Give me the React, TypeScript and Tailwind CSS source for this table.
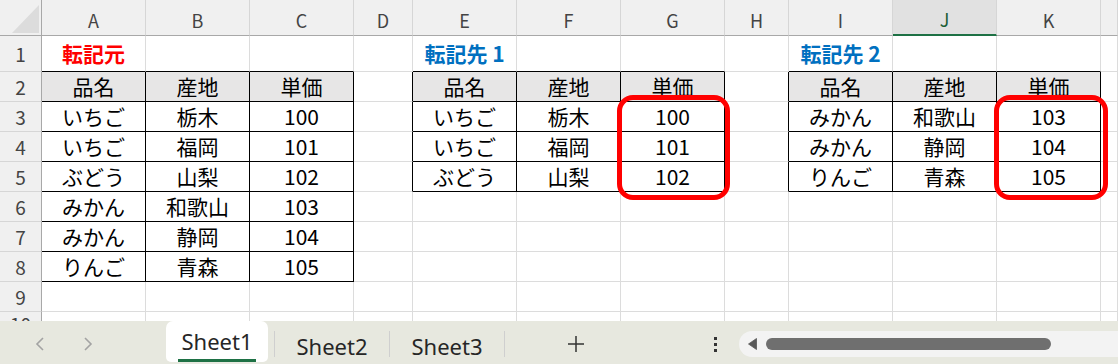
import React from "react";

const COLS = ["A", "B", "C", "D", "E", "F", "G", "H", "I", "J", "K", ""];
const ROWS = [1, 2, 3, 4, 5, 6, 7, 8, 9, 10];

type T = { c0: number; c1: number; r0: number; r1: number };
const TABLES: T[] = [
  { c0: 1, c1: 3, r0: 2, r1: 8 },
  { c0: 5, c1: 7, r0: 2, r1: 5 },
  { c0: 9, c1: 11, r0: 2, r1: 5 },
];

const inTable = (r: number, c: number) =>
  TABLES.some((t) => r >= t.r0 && r <= t.r1 && c >= t.c0 && c <= t.c1);

const HEAD = ["品名", "産地", "単価"];
const T1 = [
  ["いちご", "栃木", "100"],
  ["いちご", "福岡", "101"],
  ["ぶどう", "山梨", "102"],
  ["みかん", "和歌山", "103"],
  ["みかん", "静岡", "104"],
  ["りんご", "青森", "105"],
];
const T2 = T1.slice(0, 3);
const T3 = T1.slice(3, 6);

function cellText(r: number, c: number): { text: string; kind: "title-red" | "title-blue" | "normal" } | null {
  if (r === 1) {
    if (c === 1) return { text: "転記元", kind: "title-red" };
    if (c === 5) return { text: "転記先 1", kind: "title-blue" };
    if (c === 9) return { text: "転記先 2", kind: "title-blue" };
    return null;
  }
  const pick = (c0: number, data: string[][], maxRow: number) => {
    if (c >= c0 && c <= c0 + 2 && r >= 2 && r <= maxRow) {
      if (r === 2) return HEAD[c - c0];
      return data[r - 3][c - c0];
    }
    return null;
  };
  const t = pick(1, T1, 8) ?? pick(5, T2, 5) ?? pick(9, T3, 5);
  return t ? { text: t, kind: "normal" } : null;
}

function Corner() {
  return (
    <div className="border-r border-b border-[#a8a8a8] bg-[#f0f0f0] relative">
      <svg width="42" height="36" className="absolute left-0 top-0">
        <polygon points="39,5 39,33 12,33" fill="#dcdcdc" />
      </svg>
    </div>
  );
}

function ColHeader({ label }: { label: string }) {
  const selected = label === "J";
  return (
    <div
      className={
        "flex items-center justify-center pt-[5px] text-[18px] border-r border-[#d6d6d6] " +
        (selected
          ? "bg-[#e1e1e1] text-[#1d5e36] border-b-2 border-b-[#1e7145]"
          : "bg-[#f0f0f0] text-[#444444] border-b border-b-[#a8a8a8]")
      }
    >
      {label}
    </div>
  );
}

function RowHeader({ n }: { n: number }) {
  const last = n === 10;
  return (
    <div
      className={
        "flex justify-center text-[19px] leading-none text-[#444444] bg-[#f0f0f0] border-r border-r-[#a8a8a8] border-b border-b-[#d6d6d6] " +
        (last ? "items-start pt-[2px]" : "items-center")
      }
    >
      {n}
    </div>
  );
}

function Cell({ r, c }: { r: number; c: number }) {
  const right = inTable(r, c) || inTable(r, c + 1);
  const bottom = inTable(r, c) || inTable(r + 1, c);
  const headerFill = r === 2 && inTable(r, c);
  const t = cellText(r, c);
  const cls = [
    "flex items-center justify-center border-r border-b whitespace-nowrap overflow-visible",
    right ? "border-r-black" : "border-r-[#dcdcdc]",
    bottom ? "border-b-black" : "border-b-[#dcdcdc]",
    headerFill ? "bg-[#e7e6e6]" : "bg-white",
  ].join(" ");
  let tcls = "text-[21px] text-black leading-none";
  if (t?.kind === "title-red") tcls = "text-[21px] font-bold text-[#ff0000] leading-none";
  if (t?.kind === "title-blue") tcls = "text-[21px] font-bold text-[#0070c0] leading-none";
  return <div className={cls}>{t && <span className={tcls}>{t.text}</span>}</div>;
}

function TabBar() {
  return (
    <div
      className="h-[43px] bg-[#e7e8df] flex items-center"
      style={{ fontFamily: "'Noto Sans', 'Noto Sans CJK JP', sans-serif" }}
    >
      <div className="w-[159px] flex items-center self-stretch">
        <div className="ml-[28px] w-[24px] flex justify-center mt-[3px]">
          <svg width="12" height="16" viewBox="0 0 12 16">
            <path d="M9 2 L3 8 L9 14" fill="none" stroke="#a3a3a3" strokeWidth="1.6" />
          </svg>
        </div>
        <div className="ml-[24px] w-[24px] flex justify-center mt-[3px]">
          <svg width="12" height="16" viewBox="0 0 12 16">
            <path d="M3 2 L9 8 L3 14" fill="none" stroke="#a3a3a3" strokeWidth="1.6" />
          </svg>
        </div>
      </div>
      <div className="w-[115px] self-stretch flex">
        <div className="ml-[7px] w-[102px] h-[41px] bg-white rounded-t-[7px] rounded-b-[5px] flex flex-col items-center">
          <span className="text-[22px] text-[#262626] leading-none mt-[9px]">Sheet1</span>
          <div className="mt-[7px] w-[78px] h-[3px] bg-[#1e7145]" />
        </div>
      </div>
      <div className="w-px h-[26px] bg-[#cfcfcf] mt-[3px]" />
      <div className="w-[114px] flex justify-center">
        <span className="text-[22px] text-[#262626] leading-none mt-[6px]">Sheet2</span>
      </div>
      <div className="w-px h-[26px] bg-[#cfcfcf] mt-[3px]" />
      <div className="w-[114px] flex justify-center">
        <span className="text-[22px] text-[#262626] leading-none mt-[6px]">Sheet3</span>
      </div>
      <div className="w-px h-[26px] bg-[#cfcfcf] mt-[3px]" />
      <div className="ml-[59px] w-[24px] flex justify-center mt-[3px]">
        <svg width="18" height="18" viewBox="0 0 18 18">
          <path d="M9 1 V17 M1 9 H17" stroke="#333333" strokeWidth="1.5" fill="none" />
        </svg>
      </div>
      <div className="ml-[123px] w-[8px] flex flex-col items-center gap-[3px] mt-[3px]">
        <div className="w-[3px] h-[3px] bg-[#333333]" />
        <div className="w-[3px] h-[3px] bg-[#333333]" />
        <div className="w-[3px] h-[3px] bg-[#333333]" />
      </div>
      <div className="ml-[20px] flex-1 h-[26px] bg-[#f3f3f3] rounded-l-full flex items-center mt-[3px]">
        <svg width="9" height="12" viewBox="0 0 9 12" className="ml-[9px]">
          <path d="M0.5 6 L8.5 0.5 V11.5 Z" fill="#595959" strokeLinejoin="round" stroke="#595959" strokeWidth="0.8" />
        </svg>
        <div className="ml-[9px] w-[285px] h-[12px] rounded-full bg-[#6f6f6f]" />
      </div>
    </div>
  );
}

export default function App() {
  return (
    <div
      className="w-[1118px] h-[364px] overflow-hidden bg-white flex flex-col"
      style={{ fontFamily: "'Noto Sans CJK JP', 'Noto Sans', sans-serif" }}
    >
      <div className="relative h-[321px] overflow-hidden">
        <div className="grid grid-cols-[42px_104px_104px_104px_59px_104px_104px_104px_64px_104px_104px_104px_1fr] grid-rows-[36px_36px_30px_30px_30px_30px_30px_30px_30px_30px_30px]">
          <Corner />
          {COLS.map((l, i) => (
            <ColHeader key={i} label={l} />
          ))}
          {ROWS.map((r) => (
            <React.Fragment key={r}>
              <RowHeader n={r} />
              {COLS.map((_, i) => (
                <Cell key={i} r={r} c={i + 1} />
              ))}
            </React.Fragment>
          ))}
        </div>
        <div className="absolute left-[617px] top-[95px] w-[113px] h-[105px] border-[5px] border-[#ff0000] rounded-[16px]" />
        <div className="absolute left-[994px] top-[95px] w-[114px] h-[105px] border-[5px] border-[#ff0000] rounded-[16px]" />
      </div>
      <TabBar />
    </div>
  );
}
